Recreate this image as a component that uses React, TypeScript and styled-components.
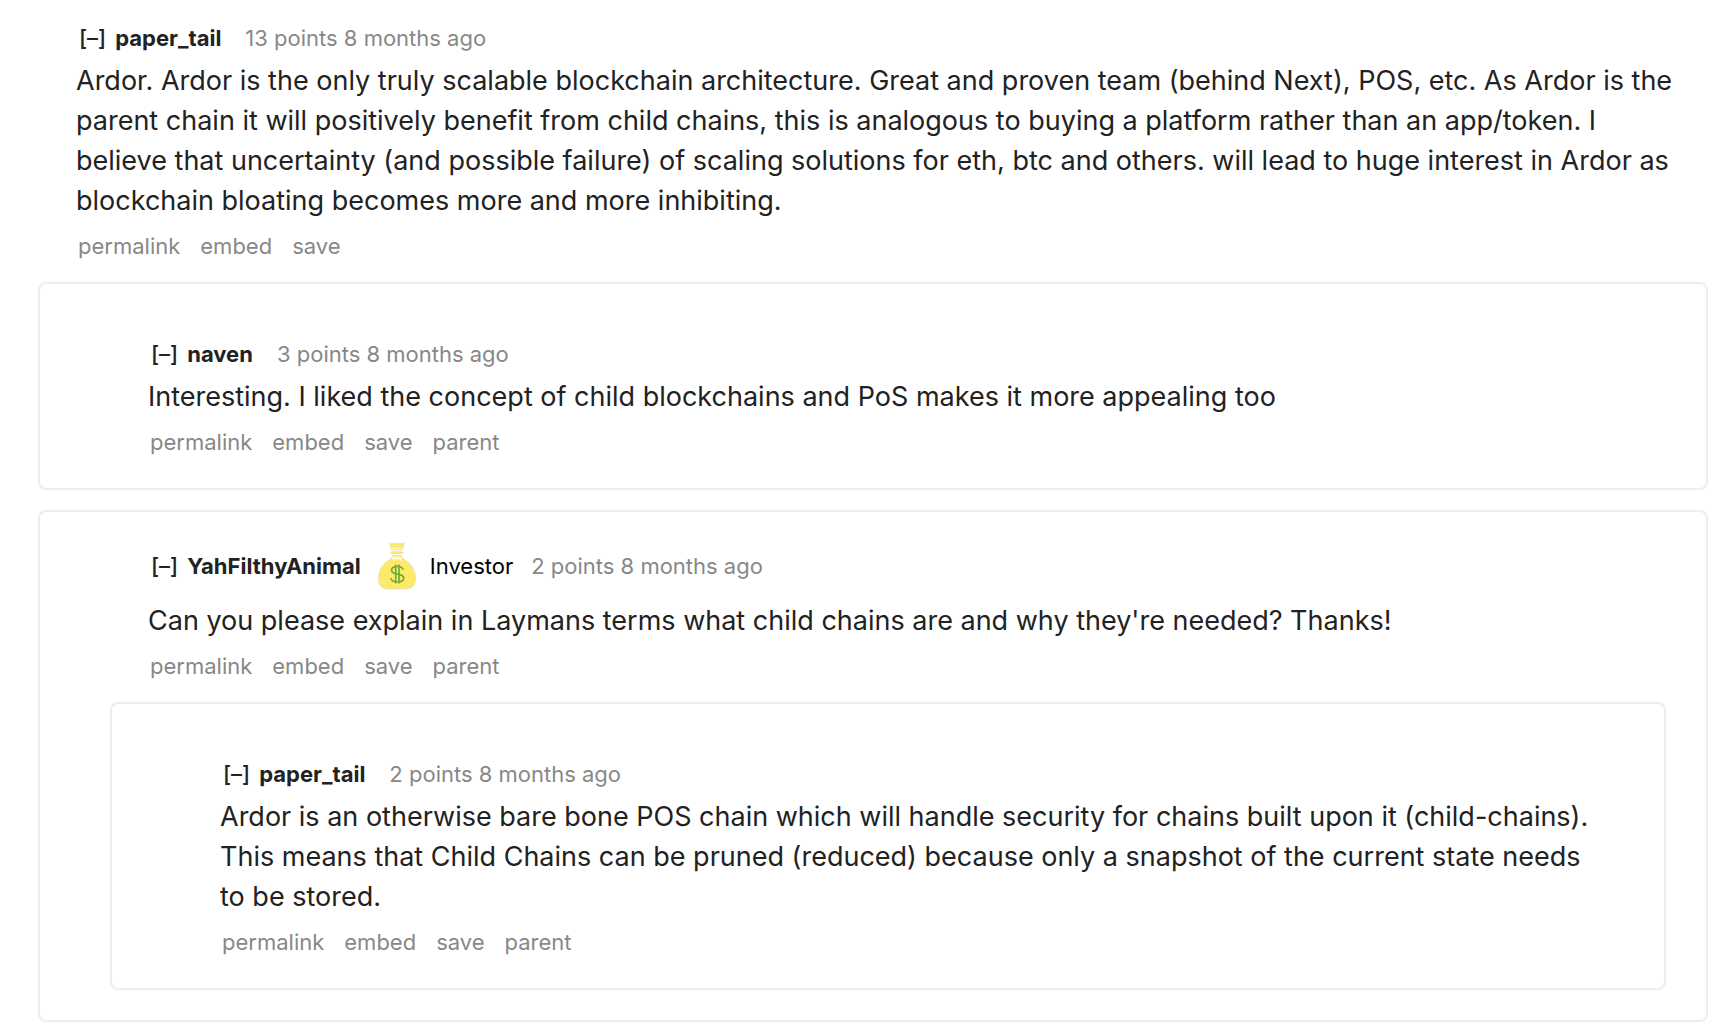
import React from "react";
import styled, { createGlobalStyle } from "styled-components";

const GlobalStyle = createGlobalStyle`
  * { box-sizing: border-box; }
  body {
    margin: 0;
    background: #ffffff;
    color: #222222;
    font-family: Inter, "Liberation Sans", sans-serif;
  }
`;

const Thread = styled.main`
  padding: 22px 26px 14px 38px;
`;

const Entry = styled.article`
  padding: 0 20px 0 38px;
`;

const Reply = styled.section<{ $compact?: boolean }>`
  margin-top: 20px;
  padding: ${(p) => (p.$compact ? 26 : 54)}px 40px 30px 70px;
  border: 2px solid #eeeeee;
  border-radius: 8px;
`;

const Tagline = styled.header<{ $tall?: boolean }>`
  display: flex;
  align-items: center;
  height: ${(p) => (p.$tall ? 56 : 32)}px;
  margin-bottom: 7px;
  padding-left: 3px;
  font-size: 22px;
  line-height: 32px;
`;

const Toggle = styled.button`
  margin: 0 9px 0 0;
  padding: 0;
  border: 0;
  background: none;
  color: inherit;
  font: inherit;
  font-weight: 500;
  cursor: pointer;
`;

const Author = styled.a`
  color: inherit;
  font-weight: 700;
  text-decoration: none;
`;

const Flair = styled.span`
  display: flex;
  align-items: center;
  gap: 14px;
  margin: 0 -6px 0 17px;
  color: #000000;
`;

const Score = styled.span`
  margin-left: 24px;
  color: #888888;
`;

const Body = styled.p`
  margin: 0;
  font-size: 27px;
  line-height: 40px;
`;

const Actions = styled.nav`
  display: flex;
  gap: 20px;
  margin-top: 9px;
  padding-left: 2px;
  font-size: 22px;
  line-height: 32px;
`;

const Action = styled.a`
  color: #888888;
  text-decoration: none;
`;

function MoneyBag() {
  return (
    <svg width="38" height="48" viewBox="0 0 38 48" aria-hidden="true">
      <path
        d="M14.5 13.500h9c.6 2.500 2.600 4.300 5.500 6 5.500 3.600 8.500 10.500 8.500 17 0 7-3.500 10.500-10 10.500h-17c-6.500 0-10-3.500-10-10.500 0-6.500 3-13.400 8.500-17 2.900-1.700 4.900-3.500 5.500-6z"
        fill="#ffe96b"
        stroke="#e3dfb4"
        strokeWidth="0.8"
      />
      <path
        d="M11.500.8c1.600.9 3 .9 4.500.2 1.800.8 4.200.8 6 0 1.500.7 2.900.7 4.500-.2L24.300 8H13.700z"
        fill="#ffe96b"
        stroke="#e3dfb4"
        strokeWidth="0.6"
      />
      <path d="M14.500 7.500l2-1.700 2.500 1.700 2.500-1.700 2 1.700" stroke="#ffffff" strokeWidth="1" fill="none" />
      <rect x="12.500" y="9.200" width="13" height="2.800" rx="1.400" fill="#ffe96b" />
      <path d="M14 14.500l1.500 3.500 1.800-3 1.700 2 1.700-2 1.800 3 1.500-3.500" stroke="#ffffff" strokeWidth="1.200" fill="none" />
      <path
        d="M25.300 27.700c-.6-2.300-3-3.200-6-3.200-3.500 0-5.800 1.400-5.800 3.800 0 5.400 12.200 2.400 12.200 7.700 0 2.600-2.700 4-6.300 4s-6-1.300-6.500-3.900M17.700 22.500v19M21 22.500v19"
        stroke="#6fae3a"
        strokeWidth="1.700"
        fill="none"
      />
    </svg>
  );
}

type CommentProps = {
  author: string;
  score: string;
  text: string;
  flair?: string;
  nested?: boolean;
};

function Comment({ author, score, text, flair, nested }: CommentProps) {
  const actions = ["permalink", "embed", "save"].concat(nested ? ["parent"] : []);
  return (
    <Entry>
      <Tagline $tall={Boolean(flair)}>
        <Toggle type="button">[–]</Toggle>
        <Author href="#">{author}</Author>
        {flair && (
          <Flair>
            <MoneyBag />
            {flair}
          </Flair>
        )}
        <Score>{score}</Score>
      </Tagline>
      <Body>{text}</Body>
      <Actions>
        {actions.map((label) => (
          <Action key={label} href="#">
            {label}
          </Action>
        ))}
      </Actions>
    </Entry>
  );
}

export default function App() {
  return (
    <>
      <GlobalStyle />
      <Thread>
        <Comment
          author="paper_tail"
          score="13 points 8 months ago"
          text="Ardor. Ardor is the only truly scalable blockchain architecture. Great and proven team (behind Next), POS, etc. As Ardor is the parent chain it will positively benefit from child chains, this is analogous to buying a platform rather than an app/token. I believe that uncertainty (and possible failure) of scaling solutions for eth, btc and others. will lead to huge interest in Ardor as blockchain bloating becomes more and more inhibiting."
        />
        <Reply>
          <Comment
            nested
            author="naven"
            score="3 points 8 months ago"
            text="Interesting. I liked the concept of child blockchains and PoS makes it more appealing too"
          />
        </Reply>
        <Reply $compact>
          <Comment
            nested
            author="YahFilthyAnimal"
            flair="Investor"
            score="2 points 8 months ago"
            text="Can you please explain in Laymans terms what child chains are and why they're needed? Thanks!"
          />
          <Reply>
            <Comment
              nested
              author="paper_tail"
              score="2 points 8 months ago"
              text="Ardor is an otherwise bare bone POS chain which will handle security for chains built upon it (child-chains). This means that Child Chains can be pruned (reduced) because only a snapshot of the current state needs to be stored."
            />
          </Reply>
        </Reply>
      </Thread>
    </>
  );
}
